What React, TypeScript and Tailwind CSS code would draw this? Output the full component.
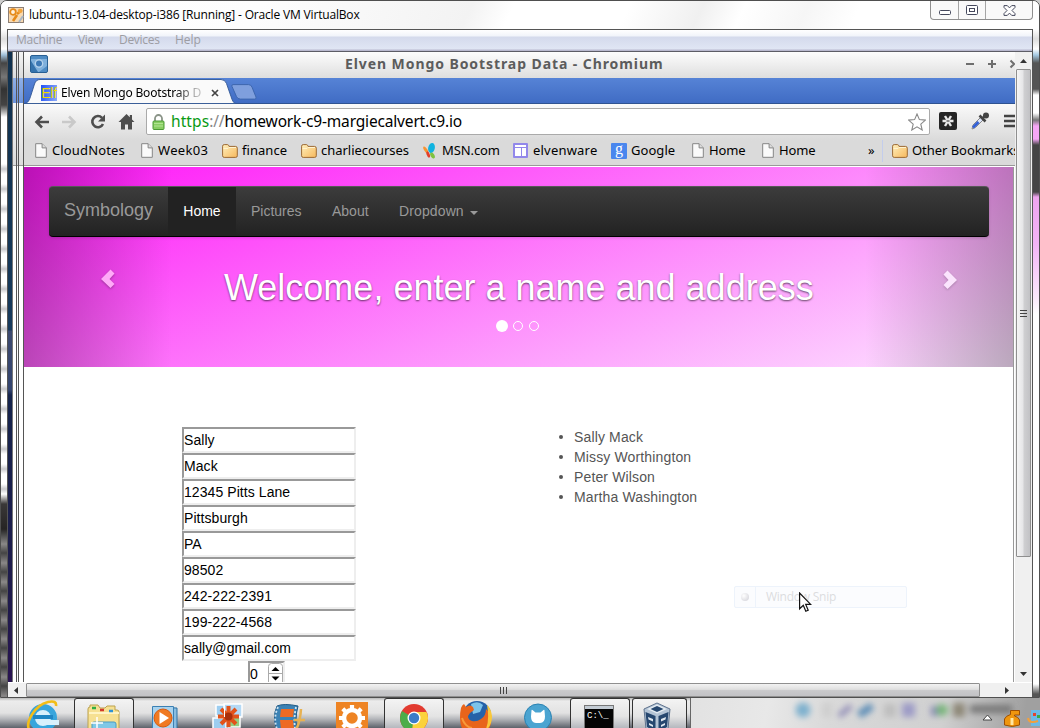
import React from "react";

const FileIcon = () => (
  <svg width="12" height="15" viewBox="0 0 12 15">
    <path d="M.7.7h6.4l4.2 4.2v9.4H.7z" fill="#fafafa" stroke="#858585" />
    <path d="M7.1.7v4.2h4.2" fill="#ddd" stroke="#858585" />
  </svg>
);

const FolderIcon = () => (
  <svg width="16" height="14" viewBox="0 0 16 14">
    <defs>
      <linearGradient id="folder" x1="0" y1="0" x2="1" y2="1">
        <stop offset="0" stopColor="#fff0bd" />
        <stop offset="1" stopColor="#f6b85c" />
      </linearGradient>
    </defs>
    <path d="M.6 11.8V2.2Q.6.6 2.2.6h3.2q1 0 1.4 1.2l.2.6h6.4q1.9 0 1.9 1.8v7.6q0 1.6-1.6 1.6H2.2Q.6 13.4.6 11.8z" fill="url(#folder)" stroke="#9c6a35" />
    <path d="M1.5 4.5H6l1-1h7" fill="none" stroke="#fff3d0" />
  </svg>
);

const MsnIcon = () => (
  <svg width="14" height="16" viewBox="0 0 14 16">
    <ellipse cx="8.5" cy="5" rx="3.3" ry="5" fill="#10b3e0" transform="rotate(12 8.5 5)" />
    <ellipse cx="2.8" cy="7" rx="1.6" ry="4" fill="#f79433" transform="rotate(-32 2.8 7)" />
    <ellipse cx="5.2" cy="11.5" rx="1.5" ry="3.3" fill="#e23e2b" transform="rotate(-20 5.2 11.5)" />
    <ellipse cx="9.5" cy="12.5" rx="1.9" ry="3.3" fill="#7fc241" transform="rotate(-30 9.5 12.5)" />
  </svg>
);

const ElvenIcon = () => (
  <svg width="15" height="15" viewBox="0 0 15 15">
    <rect width="15" height="15" rx="1" fill="#9288ea" />
    <path d="M2 2h11v2H2zM2 5h6v8H2zM9 5h4v8H9z" fill="#fff" />
  </svg>
);

const GoogleIcon = () => (
  <div className="flex h-4 w-4 items-center justify-center rounded-[1px] bg-[#4a87ee] pb-[3px] font-['Liberation_Serif',serif] text-[16px] leading-none text-white">
    g
  </div>
);

type Mark = { label: string; icon: React.ReactNode; slot: string; iconSlot: string; text: string };

const marks: Mark[] = [
  { label: "CloudNotes", icon: <FileIcon />, slot: "w-[106px]", iconSlot: "w-[17px]", text: "tracking-[0.14px]" },
  { label: "Week03", icon: <FileIcon />, slot: "w-[81px]", iconSlot: "w-[17px]", text: "tracking-[0.35px]" },
  { label: "finance", icon: <FolderIcon />, slot: "w-[79px]", iconSlot: "w-[20px]", text: "tracking-[0.05px]" },
  { label: "charliecourses", icon: <FolderIcon />, slot: "w-[122px]", iconSlot: "w-[20px]", text: "tracking-[-0.02px]" },
  { label: "MSN.com", icon: <MsnIcon />, slot: "w-[90px]", iconSlot: "w-[19px]", text: "tracking-[-0.1px]" },
  { label: "elvenware", icon: <ElvenIcon />, slot: "w-[98px]", iconSlot: "w-[20px]", text: "tracking-[0.2px]" },
  { label: "Google", icon: <GoogleIcon />, slot: "w-[81px]", iconSlot: "w-[20px]", text: "tracking-[0.05px]" },
  { label: "Home", icon: <FileIcon />, slot: "w-[70px]", iconSlot: "w-[17px]", text: "tracking-[-0.1px]" },
  { label: "Home", icon: <FileIcon />, slot: "w-[106px]", iconSlot: "w-[17px]", text: "tracking-[-0.1px]" },
];

const WindowTitle = () => (
  <div className="flex h-[28px] shrink-0 bg-[linear-gradient(115deg,#fff_0%,#fdfdfd_25%,#f3f3f3_45%,#fff_49%,#fff_60%,#f0f0f0_67%,#fff_71%,#f6f6f6_77%,#fff_82%)]">
    <div className="flex w-[929px] items-center pl-[7px]">
      <svg width="16" height="16" viewBox="0 0 16 16">
        <rect x=".5" y=".5" width="15" height="15" fill="#f8d9b0" stroke="#8c7f76" />
        <circle cx="5" cy="5" r="2.8" fill="#fff2dd" stroke="#e68a18" strokeWidth="1.8" />
        <path d="M9 7l5-4M9 8l-4 6" stroke="#e68a18" strokeWidth="2.6" />
        <circle cx="12" cy="4" r="2.2" fill="#f3a43c" />
        <path d="M11 15l4-6" stroke="#a9b7c6" strokeWidth="2" fill="none" />
      </svg>
      <span className="pl-[5px] font-['Open_Sans',sans-serif] text-[12px] tracking-[-0.17px] whitespace-nowrap text-black">
        lubuntu-13.04-desktop-i386 [Running] - Oracle VM VirtualBox
      </span>
    </div>
    <div className="flex h-[19px] w-[103px] overflow-hidden rounded-b-[4px] border border-t-0 border-[#8f8f8f] bg-[#f9f9f9]">
      <div className="flex w-[28px] items-center justify-center border-r border-[#a5a5a5]">
        <svg width="12" height="5" className="mt-[5px]"><rect x=".5" y=".5" width="11" height="4" rx="1" fill="#fff" stroke="#45485c" /></svg>
      </div>
      <div className="flex w-[27px] items-center justify-center border-r border-[#a5a5a5]">
        <svg width="12" height="10">
          <rect x=".5" y=".5" width="11" height="9" rx="1" fill="#fff" stroke="#45485c" />
          <rect x="3.5" y="3.5" width="5" height="3" fill="#fff" stroke="#45485c" />
        </svg>
      </div>
      <div className="flex flex-1 items-center justify-center">
        <svg width="13" height="11" viewBox="0 0 13 11">
          <path d="M1 .6h3.300l2.200 2.300L8.700.6H12v1.800L9 5.500l3 3.100v1.800H8.700L6.500 8.100l-2.200 2.300H1V8.600l3-3.100-3-3.100z" fill="#fff" stroke="#45485c" />
        </svg>
      </div>
    </div>
  </div>
);

const MenuBar = () => (
  <div className="flex h-[22px] shrink-0 items-center border-b border-[#5d5d66] bg-[linear-gradient(#fff_0,#f1f4fa_6px,#d4daec_7px,#e0e6f4_19px,#b9b9cf_20px)] pb-[2px] font-['Open_Sans',sans-serif] text-[12px] text-[#9d9da3]">
    <span className="w-[70px] pl-2 tracking-[-0.2px]">Machine</span>
    <span className="w-[41px] tracking-[-0.3px]">View</span>
    <span className="w-[56px] tracking-[-0.3px]">Devices</span>
    <span>Help</span>
  </div>
);

const WindowStack = () => (
  <div className="flex w-[16px] shrink-0">
    <div className="w-[4px] bg-[linear-gradient(#12324f_0,#173a5c_278px,#3d4a70_279px,#34456f_338px,#15244c_343px,#201a4c_560px,#2a1452_100%)]" />
    <div className="flex w-[12px] border-l border-[#777] bg-[linear-gradient(#f4f4f4_0,#dcdcdc_26px,#8fb0e8_26px,#6d94dc_51px,#f6f6f6_51px,#dcdcdc_113px,#999_113px,#999_114px,#fff_114px)]">
      <div className="w-[4px] border-r border-[#555]" />
      <div className="w-[2px] border-r border-[#555]" />
      <div className="flex-1 border-r border-[#555]" />
    </div>
  </div>
);

const ChromiumTitle = () => (
  <div className="flex h-[26px] shrink-0 items-center bg-[linear-gradient(#fdfdfd,#dedede)] pl-[6px]">
    <svg width="18" height="18" viewBox="0 0 18 18" className="-mt-[2px] shrink-0">
      <rect x=".5" y=".5" width="17" height="17" rx="1.5" fill="#4f8cc4" stroke="#285f93" />
      <path d="M1 4h16v7L9 17H7L1 6z" fill="#7fb0dc" />
      <path d="M1 6l7 11H1z" fill="#3573ad" />
      <circle cx="9" cy="8.5" r="4.3" fill="#b7d3ec" />
      <circle cx="9" cy="8.5" r="3" fill="#3d79b6" />
    </svg>
    <span className="w-[630px] pb-[4px] pl-[297px] font-['Noto_Sans',sans-serif] text-[14px] font-bold tracking-[0.92px] whitespace-nowrap text-[#5c5c5c]">
      Elven Mongo Bootstrap Data - Chromium
    </span>
    <svg width="50" height="12" viewBox="0 0 50 12" className="-mt-[2px] ml-auto shrink-0" stroke="#6e6e6e" strokeWidth="2">
      <path d="M1 6h8M23 6h8M27 2v8M45.500 2.500l3.500 3.500-3.500 3.500" fill="none" />
    </svg>
  </div>
);

const TabStrip = () => (
  <div className="flex h-[26px] shrink-0 border-b border-[#2f5391] bg-[linear-gradient(#5683d6,#406cc4)]">
    <div className="relative h-[26px] w-[212px]">
      <svg className="absolute inset-0" width="212" height="26" viewBox="0 0 212 26">
        <path d="M0 25.500C4 25.500 5.500 22 7 17l3.500-11Q12 1.500 16 1.500h181q4 0 5.500 4l4.500 13q2 7 5 7z" fill="#fafafa" stroke="#315794" strokeWidth=".9" />
      </svg>
      <div className="relative flex h-full items-center pt-[3px] pl-[17px]">
        <span className="flex h-4 w-4 shrink-0 items-center justify-center bg-[linear-gradient(100deg,#2353f5,#8daaf7)] font-['Liberation_Sans',sans-serif] text-[14px] leading-none tracking-[-0.2px] text-[#f0dc00]">Elf</span>
        <span className="w-[145px] bg-[linear-gradient(90deg,#000_118px,#bbb_140px)] bg-clip-text pl-[4px] font-['Noto_Sans',sans-serif] text-[12px] tracking-[-0.17px] whitespace-nowrap text-transparent">
          Elven Mongo Bootstrap D
        </span>
        <svg width="8" height="8" viewBox="0 0 8 8" className="ml-[9px]"><path d="M1 1l6 6M7 1L1 7" stroke="#444" strokeWidth="1.7" /></svg>
      </div>
    </div>
    <svg width="26" height="16" viewBox="0 0 26 16" className="mt-[6px] -ml-[5px]">
      <path d="M2 .6h15.500q2.500 0 3.500 2.500l4 10q.6 2-1.500 2H9.500q-3 0-4-2.500L1 2.500Q.3.6 2 .6z" fill="#7f9fdd" stroke="#3d66ae" />
    </svg>
  </div>
);

const Toolbar = () => (
  <div className="flex h-[34px] shrink-0 items-center pt-px pl-[10px]">
    <svg width="112" height="20" viewBox="0 0 112 20" fill="none" strokeWidth="2.6" stroke="#4e4e4e" className="-mt-px shrink-0">
      <path d="M15 11H3M8 5.500L2.500 11 8 16.500" />
      <path d="M28 11h12M35 5.500l5.500 5.500-5.500 5.500" stroke="#c9c9c9" />
      <path d="M68 6.800A5.600 5.600 0 1 0 69 13" />
      <path d="M71 3.500v7h-7z" fill="#4e4e4e" stroke="none" />
      <path d="M92.500 3L84.500 11h2.500v7.500h4v-5h3v5h4V11h2.500l-2.500-2.500V4h-2.200v2.200z" fill="#4e4e4e" stroke="none" />
    </svg>
    <div className="flex h-[27px] w-[784px] shrink-0 items-center rounded-[2px] border border-[#aaa] bg-white pt-px pr-[3px] pl-[5px]">
      <svg width="13" height="16" viewBox="0 0 13 16" className="-mt-px shrink-0">
        <path d="M3 8V4.500a3.500 3.500 0 0 1 7 0V8" fill="none" stroke="#8a9488" strokeWidth="1.8" />
        <rect x="1" y="7" width="11" height="8.500" rx="1" fill="#88ce62" stroke="#4b9a34" />
        <path d="M2 9.500h9M2 12h9" stroke="#b0e493" />
      </svg>
      <span className="pl-[6px] font-['Noto_Sans',sans-serif] text-[15.5px] tracking-[-0.17px] whitespace-nowrap text-black">
        <span className="tracking-[0.1px] text-[#0a9a14]">https</span><span className="text-[#888]">://</span>homework-c9-margiecalvert.c9.io
      </span>
      <svg width="18" height="18" viewBox="0 0 18 18" className="ml-auto">
        <path d="M9 1l2.400 5.600 6 .5-4.600 4 1.400 5.900L9 13.900 3.800 17l1.400-5.900-4.600-4 6-.5z" fill="#fff" stroke="#888" strokeWidth="1.1" />
      </svg>
    </div>
    <svg width="18" height="18" viewBox="0 0 18 18" className="-mt-px ml-[9px] shrink-0">
      <rect width="18" height="18" rx="2" fill="#252525" />
      <path d="M3.500 9h11M6 4l6 10M12 4L6 14" stroke="#e9e9e9" strokeWidth="2.4" />
      <path d="M7.500 9h3" stroke="#252525" strokeWidth="1" />
    </svg>
    <svg width="20" height="18" viewBox="0 0 20 18" className="-mt-px ml-[13px] shrink-0">
      <path d="M2 17l1-4 8-8 2.500 2.500-8 8z" fill="#dce4f8" stroke="#888" />
      <path d="M3 15.500l5.500-5.500" stroke="#315fd6" strokeWidth="2.6" />
      <path d="M9.500 3.500l6 6M12.500 6.500l3.500-4" stroke="#444" strokeWidth="2.6" />
      <circle cx="16" cy="3.500" r="3" fill="#444" />
    </svg>
    <svg width="12" height="14" viewBox="0 0 12 14" className="-mt-px ml-auto shrink-0"><path d="M1 2h11M1 7h11M1 12h11" stroke="#444" strokeWidth="2.6" /></svg>
  </div>
);

const BookmarkBar = () => (
  <div className="flex h-[27px] shrink-0 items-center overflow-hidden pb-[2px] pl-[11px] font-['Noto_Sans',sans-serif] text-[13px] whitespace-nowrap text-black">
    {marks.map((m, i) => (
      <div key={i} className={`flex shrink-0 items-center ${m.slot}`}>
        <span className={`shrink-0 ${m.iconSlot}`}>{m.icon}</span>
        <span className={m.text}>{m.label}</span>
      </div>
    ))}
    <span className="w-[14px] shrink-0">»</span>
    <span className="mr-[9px] h-[22px] w-px shrink-0 bg-[#c3cdec]" />
    <span className="w-[20px] shrink-0"><FolderIcon /></span>
    <span className="tracking-[-0.05px]">Other Bookmarks</span>
  </div>
);

const Hero = () => (
  <div className="relative flex h-[200px] shrink-0 flex-col bg-[linear-gradient(160deg,#ff16f8,#fce4ff)]">
    <div className="absolute inset-y-0 left-0 w-[148px] bg-[linear-gradient(90deg,rgba(0,0,0,0.27),rgba(0,0,0,0))]" />
    <div className="absolute inset-y-0 right-0 w-[148px] bg-[linear-gradient(90deg,rgba(0,0,0,0),rgba(0,0,0,0.26))]" />
    <div className="relative mt-[19px] mr-[24px] ml-[25px] flex h-[51px] shrink-0 items-center rounded-[4px] border-t border-b border-t-[#585858] border-b-black bg-[linear-gradient(#3c3c3c,#222)] font-['Liberation_Sans',sans-serif] text-[14px] text-[#999] shadow-[0_1px_3px_rgba(0,0,0,0.15)]">
      <span className="w-[119px] pb-[3px] pl-[15px] text-[18px]">Symbology</span>
      <span className="flex h-full w-[68px] items-center justify-center bg-[#222] text-white">Home</span>
      <span className="w-[81px] pl-[15px]">Pictures</span>
      <span className="w-[67px] pl-[15px]">About</span>
      <span className="flex items-center pl-[15px] tracking-[0.12px]">
        Dropdown
        <svg width="8" height="4" className="mt-[2px] ml-[6px]"><path d="M0 0h8L4 4z" fill="#999" /></svg>
      </span>
    </div>
    <div className="relative flex h-[100px] pr-[55px] pl-[76px]">
      <svg width="16" height="22" viewBox="0 0 16 22" className="mt-[31px] drop-shadow-[0_1px_1px_rgba(0,0,0,0.3)]"><path d="M10.500 1.500l4 4L9.500 11l5 5-4 4L1 11z" fill="#ffa9f8" /></svg>
      <h1 className="ml-[108px] pt-[31px] font-['Liberation_Sans',sans-serif] text-[36px] leading-[40px] whitespace-nowrap text-white [text-shadow:0_1px_2px_rgba(0,0,0,0.6)]">
        Welcome, enter a name and address
      </h1>
      <svg width="16" height="22" viewBox="0 0 16 22" className="mt-[32px] ml-auto drop-shadow-[0_1px_1px_rgba(0,0,0,0.2)]"><path d="M5.500 1.500l-4 4 5 5.500-5 5 4 4L15 11z" fill="#fbe4fd" /></svg>
    </div>
    <svg width="44" height="14" viewBox="0 0 44 14" className="relative -mt-[18px] ml-[471px]">
      <circle cx="7" cy="7" r="6" fill="#fff" />
      <circle cx="23" cy="7" r="4.5" fill="none" stroke="#fff" />
      <circle cx="39" cy="7" r="4.5" fill="none" stroke="#fff" />
    </svg>
  </div>
);

const fields = ["Sally", "Mack", "12345 Pitts Lane", "Pittsburgh", "PA", "98502", "242-222-2391", "199-222-4568", "sally@gmail.com"];
const people = ["Sally Mack", "Missy Worthington", "Peter Wilson", "Martha Washington"];

const PageBody = () => (
  <div className="flex min-h-0 flex-1 items-start overflow-hidden bg-white pt-[60px] pl-[158px] font-['Liberation_Sans',sans-serif] text-[14px]">
    <div className="flex w-[174px] shrink-0 flex-col items-center text-black">
      {fields.map((f) => (
        <div key={f} className="flex h-[26px] w-full shrink-0 items-center border-2 border-t-[#999] border-r-[#eee] border-b-[#eee] border-l-[#999] tracking-[0.07px]">{f}</div>
      ))}
      <div className="mr-[5px] flex h-[26px] w-[37px] shrink-0 items-center justify-between border-2 border-t-[#999] border-r-[#eee] border-b-[#eee] border-l-[#999]">
        0
        <svg width="15" height="22" viewBox="0 0 15 22">
          <path d="M.5 22V3.500q0-3 3-3h8q3 0 3 3V22M.5 10.500h14" fill="#fff" stroke="#aaa" />
          <path d="M3.500 8h8l-4-4zM3.500 13.500h8l-4 4z" fill="#000" />
        </svg>
      </div>
    </div>
    <ul className="ml-[203px] text-[#555]">
      {people.map((p) => (
        <li key={p} className="flex h-5 items-center tracking-[0.14px]">
          <span className="mr-[11px] h-[4px] w-[4px] rounded-full bg-[#555]" />
          {p}
        </li>
      ))}
    </ul>
  </div>
);

const VScroll = () => (
  <div className="flex w-[17px] shrink-0 flex-col items-center bg-[#f0f0f0]">
    <div className="flex h-[17px] items-center"><svg width="7" height="4"><path d="M0 4h7L3.500 0z" fill="#333" /></svg></div>
    <div className="flex h-[488px] w-[15px] flex-col items-center justify-center gap-[2px] rounded-[1px] border border-[#8f8f8f] bg-[linear-gradient(90deg,#f5f5f5,#e6e6e8_45%,#cfcfd1_55%,#c2c2c5)]">
      <span className="h-px w-[7px] bg-[#444]" />
      <span className="h-px w-[7px] bg-[#444]" />
      <span className="h-px w-[7px] bg-[#444]" />
    </div>
    <div className="mt-auto flex h-[17px] items-center"><svg width="7" height="4"><path d="M0 0h7L3.500 4z" fill="#333" /></svg></div>
  </div>
);

const HScroll = () => (
  <div className="flex h-[15px] shrink-0 border-t border-white bg-[#f0f0f0]">
    <div className="flex w-[18px] shrink-0 items-center justify-center pr-[2px]"><svg width="4" height="7"><path d="M4 0v7L0 3.500z" fill="#333" /></svg></div>
    <div className="flex w-[954px] shrink-0 items-center justify-center gap-[2px] rounded-[1px] border border-[#8f8f8f] bg-[linear-gradient(#f2f2f2,#dfdfdf_45%,#c9c9cb_55%,#c2c2c5)]">
      <span className="h-[7px] w-px bg-[#444]" />
      <span className="h-[7px] w-px bg-[#444]" />
      <span className="h-[7px] w-px bg-[#444]" />
    </div>
    <div className="flex flex-1 items-center pl-[25px]"><svg width="4" height="7"><path d="M0 0v7l4-3.500z" fill="#333" /></svg></div>
  </div>
);

const TaskIcon = ({ className, children }: { className: string; children: React.ReactNode }) => (
  <div className={`flex h-full shrink-0 items-start justify-center overflow-hidden pt-[2px] ${className}`}>
    <svg width="34" height="34" viewBox="0 0 34 34" className="shrink-0">{children}</svg>
  </div>
);

const open = "rounded-t-[3px] border border-b-0 border-[#333] bg-[linear-gradient(#f4f4f4,#e4e4e4_60%,#b5b8be)] !pt-px";

const Taskbar = () => (
  <div className="flex h-[30px] shrink-0 bg-[linear-gradient(#b9b9b9_0,#ececec_3px,#e2e2e2_15px,#b4b6ba_21px,#5d626a_30px)]">
    <div className="flex w-[690px] shrink-0">
      <TaskIcon className="ml-[12px] w-[62px]">
        <circle cx="17" cy="18" r="11" fill="#d8f0fc" stroke="#38a5dc" strokeWidth="6" />
        <path d="M7 17h20" stroke="#1f86c4" strokeWidth="4" />
        <path d="M19 22.500h14" stroke="#d8f0fc" strokeWidth="5" />
        <path d="M4 31C-2 23 9 5 22 2q9-2 8 4" fill="none" stroke="#f3bd17" strokeWidth="2.6" />
      </TaskIcon>
      <TaskIcon className={`w-[60px] ${open}`}>
        <path d="M1 36V9q0-2 2-2V5h8l2 3h5l2-2h8v4h2q2 0 2 2v24z" fill="#f6e092" stroke="#bba14d" />
        <path d="M2 13h30" stroke="#fff4c4" strokeWidth="2" />
        <path d="M5 8h4" stroke="#2fae44" strokeWidth="2.5" /><path d="M13 10h4" stroke="#d3392c" strokeWidth="2.5" /><path d="M22 11h4" stroke="#2f92d3" strokeWidth="2.5" />
        <path d="M5 36V24q0-2 2-2h20q2 0 2 2v12" fill="#7fc8e6" stroke="#4a9cc3" />
        <path d="M11 36v-7h13v7" fill="#d9ecd6" />
        <path d="M10 17v12M4 23h12" stroke="#fff" strokeWidth="1.5" />
      </TaskIcon>
      <TaskIcon className="w-[61px]">
        <path d="M6 7l23 1v28H6z" fill="#8abde0" stroke="#2f72a4" /><path d="M4.500 6.500h21V36h-21z" fill="#a9d3ee" stroke="#3a80b4" />
        <circle cx="15" cy="18" r="9" fill="#f07a22" stroke="#d8590e" />
        <path d="M11.500 12l9.500 6-9.500 6z" fill="#fff" />
      </TaskIcon>
      <TaskIcon className="w-[63px]">
        <path d="M6 5h12v11H6zM3 18h13v12H3z" fill="#9ccdf0" stroke="#fff" strokeWidth="1.5" /><path d="M14 4h18v13H14z" fill="#b4d9f5" stroke="#fff" strokeWidth="1.5" /><path d="M18 17h12v10H18z" fill="#93cf82" stroke="#fff" strokeWidth="1.5" />
        <g stroke="#e2531a" strokeWidth="4"><path d="M11 9l15 15M26 9L11 24M18.500 6v21M8 16.500h21" /></g>
        <circle cx="18.5" cy="16.5" r="4" fill="#a8300c" />
        <path d="M14.500 4.500V17" stroke="#fff" />
      </TaskIcon>
      <TaskIcon className="w-[61px]">
        <path d="M5 6q7-3 21 0-4 14 0 30H7Q-1 18 5 6z" fill="#3c82b4" stroke="#1f5a86" /><path d="M9 9h13l-1 8H8zM8 20h13l1 9H9z" fill="#ee6a23" />
        <path d="M6 7Q0 20 7 34M24 7q-3 14 0 27" stroke="#cfe5f3" strokeWidth="1.8" strokeDasharray="2 2" fill="none" />
        <path d="M20 35q8-8 9-26M22 20h11" stroke="#e7b253" strokeWidth="2.5" fill="none" />
      </TaskIcon>
      <TaskIcon className="w-[65px]">
        <rect x="1" y="2" width="32" height="34" fill="#ee8424" />
        <circle cx="17" cy="18" r="8" fill="none" stroke="#fff" strokeWidth="4.5" />
        <path d="M17 5v4M17 27v4M4 18h4M26 18h4M7.800 8.800l2.900 2.900M26.200 8.800l-2.900 2.900M7.800 27.200l2.900-2.900M26.200 27.200l-2.900-2.900" stroke="#fff" strokeWidth="4.2" />
      </TaskIcon>
      <TaskIcon className={`w-[60px] ${open}`}>
        <circle cx="17" cy="18" r="14" fill="#e23b30" />
        <path d="M17 18L5 11A14 14 0 0 0 15 32z" fill="#4cad4a" /><path d="M17 12h12.500A14 14 0 0 1 15 32z" fill="#fbd23c" />
        <circle cx="17" cy="18" r="6.5" fill="#fff" /><circle cx="17" cy="18" r="5.2" fill="#3b7cc8" />
      </TaskIcon>
      <TaskIcon className="w-[65px]">
        <circle cx="17" cy="15" r="14" fill="#2562a8" /><path d="M11 4q7-4 12 1l-3 7-7 2z" fill="#7cc3ea" />
        <path d="M1 8q1-3 3-4l2 3q4-3 7 0l1 3-4 3-2 3q0 4 4 5 5 1 9-2 5-3 5-10 6 5 5 14-3 14-16 14Q0 35 0 18q0-6 1-10z" fill="#e8641b" />
        <path d="M27 5q4 3 5 11 0 10-7 15 5-10 2-26z" fill="#f9c83a" />
        <path d="M2 18q3 9 10 10" stroke="#f79a3b" strokeWidth="2" fill="none" />
      </TaskIcon>
      <TaskIcon className="w-[61px]">
        <circle cx="15" cy="17.5" r="13.5" fill="#4ba4d1" stroke="#2a82b2" />
        <path d="M8.500 10.500q0-1 1-.5l3 2.500h5l3-2.500q1-.5 1 .5l.5 6q0 6.500-5 6.500h-4q-5 0-5-6.500z" fill="#fff" />
      </TaskIcon>
      <TaskIcon className={`w-[60px] pr-[4px] ${open}`}>
        <rect x="3.5" y="5.5" width="29" height="32" fill="#050505" stroke="#777" /><path d="M4 7.500h28" stroke="#c4ccd4" strokeWidth="3" />
        <text x="6" y="18" fontSize="9" fill="#fff" className="font-['Liberation_Mono',monospace]">C:\_</text>
      </TaskIcon>
      <TaskIcon className={`ml-[2px] w-[55px] pr-[6px] ${open}`}>
        <path d="M17 3l13 6-2 20-11 6-11-6L4 9z" fill="#b4c4d5" stroke="#5f738d" />
        <path d="M7 9l10-4.500L27 9l-10 4.500z" fill="#e4ebf2" /><path d="M10.500 9L17 6l6.500 3-6.500 3z" fill="#26476f" />
        <path d="M5.500 12l10 4v16l-8.500-5zM28.500 12l-10 4v16l8.500-5z" fill="#26476f" />
        <path d="M8 17l5 2v2.500l-4.500-2zM26 17l-5 2v2.500l4.500-2zM9 23l4 2v2l-4-2zM25 23l-4 2v2l4-2z" fill="#dfe7ef" />
      </TaskIcon>
    </div>
    <div className="flex flex-1 border-l border-[#666] bg-[linear-gradient(100deg,#e2e2e2_0%,#e8e8e8_22%,#d9d9d9_40%,#d0d0d0_72%,#a0a0a0_95%)]">
      <svg width="349" height="30" viewBox="1 0 349 30">
        <defs><filter id="haze" x="-10%" y="-50%" width="120%" height="200%"><feGaussianBlur stdDeviation="3" /></filter></defs>
        <g filter="url(#haze)">
          <circle cx="113" cy="12" r="7.5" fill="#7db0ce" /><path d="M132 5h10v14h-10z" fill="#cfcfcf" />
          <path d="M149 18l12-10" stroke="#8d89b5" strokeWidth="5" /><path d="M169 17l13-9" stroke="#5789b5" strokeWidth="7" />
          <path d="M194 6h12v13h-12z" fill="#bebebe" /><path d="M212 5h13v14h-13z" fill="#9d9bc6" />
          <path d="M241 8h7v10h-7z" fill="#8888b4" /><circle cx="252" cy="12" r="6" fill="#78b579" />
          <path d="M263 5h12v14h-12z" fill="#8e8878" /><path d="M280 11h42" stroke="#777" strokeWidth="8" />
        </g>
        <path d="M293 22l4.500-5 4.500 5z" fill="#fff" stroke="#444" />
        <path d="M314.500 27v-6q1-3 6-4.500V12.500h9v4.500h-5v1q4 1 5 4v5q-7 3-15 0z" fill="#ef960e" stroke="#9c4f04" /><path d="M322 20v7" stroke="#ffe7a2" strokeWidth="3" />
        <rect x="341" y="12" width="12" height="16" fill="#6cb9e6" /><path d="M343 15h3v3h-3z" fill="#e3432d" /><path d="M347 17h3v3h-3z" fill="#36a948" /><path d="M338 20q1 6 10 3" stroke="#f2a03c" strokeWidth="2" fill="none" />
      </svg>
    </div>
  </div>
);

export default function App() {
  return (
    <div className="relative flex h-[728px] w-[1040px] flex-col overflow-hidden bg-[#ccc]">
      <div className="flex h-[698px] shrink-0 flex-col overflow-hidden rounded-t-[7px] border border-[#4f4f4f] bg-white">
        <WindowTitle />
        <div className="flex min-h-0 flex-1">
          <div className="flex w-[6px] shrink-0 flex-col bg-[linear-gradient(#fff_0,#ddd_10px,#fff_20px,#9fc0da_26px,#444_34px,#777_48px,#333_60px,#444_76px,#fff_88px)]">
            <div className="mt-[130px] h-[335px] shrink-0 bg-[repeating-linear-gradient(#fff_0,#fff_5px,#c9c9cc_10px,#fff_15px,#fff_20px)]" />
            <div className="h-[40px] shrink-0 bg-[linear-gradient(#fff,#3a3838_10px,#262424_35px,#444)]" />
            <div className="flex-1 bg-[repeating-linear-gradient(#444_0,#8a8888_10px,#444_19px)]" />
          </div>
          <div className="flex w-[1026px] shrink-0 flex-col border border-b-0 border-[#555]">
            <MenuBar />
            <div className="flex min-h-0 flex-1">
              <WindowStack />
              <div className="flex w-[991px] shrink-0 flex-col">
                <ChromiumTitle />
                <TabStrip />
                <div className="flex h-[62px] shrink-0 flex-col overflow-hidden border-b border-[#999] bg-[linear-gradient(#fafafa,#dadada_60%)]">
                  <Toolbar />
                  <BookmarkBar />
                </div>
                <div className="mt-px mr-px flex min-h-0 flex-1 flex-col border-r border-[#999]">
                  <Hero />
                  <PageBody />
                </div>
              </div>
              <VScroll />
            </div>
            <HScroll />
          </div>
          <div className="w-[6px] bg-[linear-gradient(#fff_0,#ddd_10px,#fff_20px,#a5c9e2_26px,#555_34px,#555_60px,#fff_66px,#fff_84px,#777_91px,#f6a6f6_97px,#f6a6f6_110px,#444_116px,#444_163px,#eea4ee_168px,#f3b4f6_215px,#fbeafb_270px,#fff_285px,#fff_655px,#555_665px)]" />
        </div>
      </div>
      <Taskbar />
      <div className="absolute top-[586px] left-[734px] flex h-[22px] w-[173px] items-center rounded-[2px] border border-[#edf3fb] bg-[#fbfcfe] font-['Open_Sans',sans-serif] text-[12px] text-[#dcdcde]">
        <span className="ml-[6px] h-2 w-2 rounded-full bg-[radial-gradient(circle_at_35%_35%,#fff,#cfcfd6)]" />
        <span className="ml-[6px] h-full w-px bg-[#edf3fb]" />
        <span className="pl-[10px] tracking-[-0.25px]">Window Snip</span>
      </div>
      <svg className="absolute top-[592px] left-[799px]" width="13" height="21" viewBox="0 0 13 21">
        <path d="M.6 1v15.800l3.700-3.500 2.500 6 2.400-1-2.500-5.900h5z" fill="#fff" stroke="#111" strokeWidth="1.2" />
      </svg>
    </div>
  );
}
